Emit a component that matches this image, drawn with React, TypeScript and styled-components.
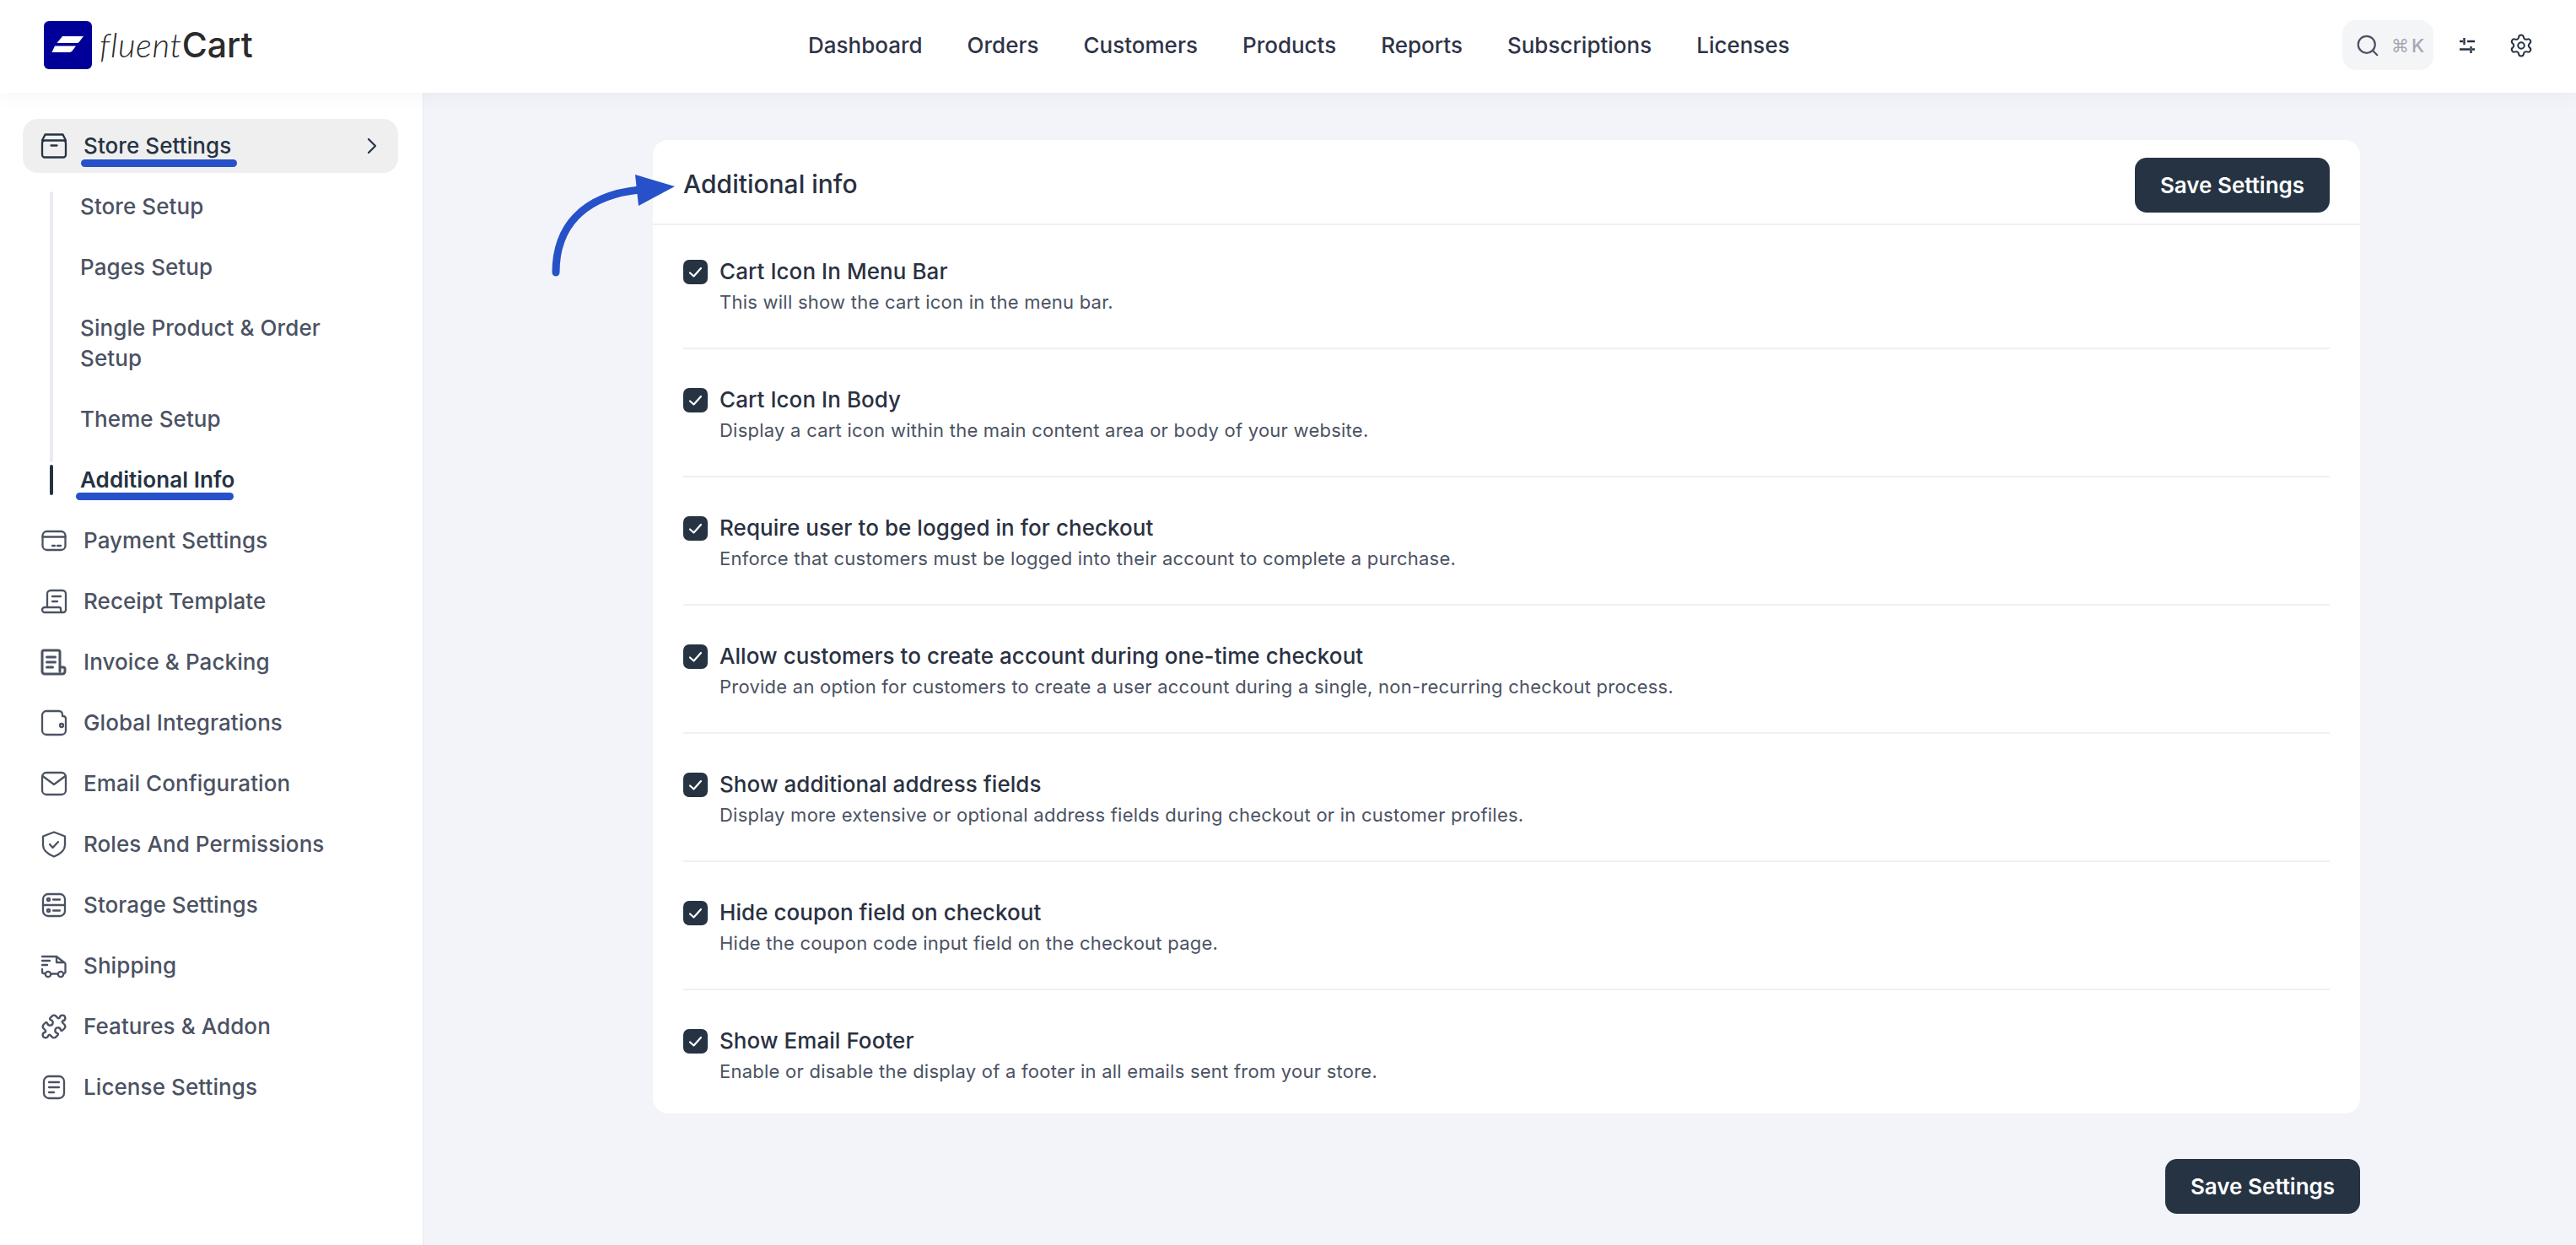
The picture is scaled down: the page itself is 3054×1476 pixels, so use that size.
import React from "react";
import styled, { createGlobalStyle } from "styled-components";
import { Search, Settings, Puzzle } from "lucide-react";

const Global = createGlobalStyle`
  html, body { margin: 0; padding: 0; }
  body { background: #f3f4f9; font-family: Inter, "Liberation Sans", sans-serif; -webkit-font-smoothing: antialiased; }
  * { box-sizing: border-box; }
`;

const Page = styled.div`
  width: 3054px;
  height: 1476px;
  display: flex;
  flex-direction: column;
  overflow: hidden;
  position: relative;
`;
const Header = styled.header`
  height: 110px;
  flex: none;
  background: #fff;
  display: flex;
  align-items: center;
  padding: 0 50px 3px 52px;
  box-shadow: 0 2px 24px rgba(30, 40, 70, 0.05);
  position: relative;
  z-index: 2;
`;
const Brand = styled.div`
  display: flex;
  align-items: center;
  gap: 9px;
  width: 906px;
`;
const BrandName = styled.span`
  font-size: 40px;
  color: #2b2b2b;
  line-height: 1;
  display: flex;
  align-items: baseline;
`;
const BrandThin = styled.span`
  font-family: Lato, sans-serif;
  font-weight: 300;
  font-style: italic;
  letter-spacing: 0.6px;
`;
const BrandBold = styled.span`
  font-family: Inter, sans-serif;
  font-weight: 500;
  font-size: 41px;
`;
const TopNav = styled.nav`
  display: flex;
  gap: 53px;
`;
const TopLink = styled.a`
  font-size: 26px;
  font-weight: 500;
  color: #2f3448;
  line-height: 36px;
`;
const Tools = styled.div`
  margin-left: auto;
  display: flex;
  align-items: center;
`;
const SearchPill = styled.div`
  width: 108px;
  height: 59px;
  border-radius: 16px;
  background: #f4f5f7;
  display: flex;
  align-items: center;
  padding-left: 15px;
  gap: 13px;
  color: #4b5263;
  margin-right: 31px;
`;
const Kbd = styled.span`
  font-size: 21px;
  font-weight: 500;
  color: #a4a7b3;
  letter-spacing: 1px;
  font-family: "DejaVu Sans", Inter, sans-serif;
`;
const KbdKey = styled.span`
  font-family: Inter, sans-serif;
  font-size: 22px;
  margin-left: 2px;
`;
const SliderIcon = styled.svg`
  margin-right: 40px;
  display: block;
`;
const Body = styled.div`
  flex: 1;
  display: flex;
  min-height: 0;
`;
const Sidebar = styled.aside`
  width: 503px;
  flex: none;
  background: #fff;
  border-right: 2px solid #eceef4;
  padding: 31px 29px 0 27px;
  display: flex;
  flex-direction: column;
  gap: 8px;
`;
const MenuItem = styled.div<{ $active?: boolean }>`
  min-height: 64px;
  display: flex;
  align-items: center;
  gap: 19px;
  padding: 14px 21px;
  border-radius: 18px;
  background: ${(p) => (p.$active ? "#efefef" : "transparent")};
  color: ${(p) => (p.$active ? "#253343" : "#4b5263")};
  font-size: 26px;
  font-weight: 500;
  line-height: 36px;
  letter-spacing: 0.08px;
  position: relative;
`;
const Spacer = styled.span`
  margin-left: auto;
  margin-right: 4px;
  display: flex;
`;
const MenuIcon = styled.svg`
  flex: none;
  display: block;
`;
const SubList = styled.div`
  display: flex;
  flex-direction: column;
  gap: 8px;
  margin-left: 32px;
  position: relative;
  &::before {
    content: "";
    position: absolute;
    left: 0;
    top: 14px;
    bottom: 53px;
    width: 4px;
    border-radius: 2px;
    background: #e9ebf2;
  }
`;
const SubItem = styled.div<{ $active?: boolean }>`
  padding: 14px 30px 14px 36px;
  font-size: 26px;
  line-height: 36px;
  letter-spacing: 0.08px;
  font-weight: ${(p) => (p.$active ? 600 : 500)};
  color: ${(p) => (p.$active ? "#253343" : "#4b5263")};
  position: relative;
  ${(p) =>
    p.$active &&
    `&::before { content: ""; position: absolute; left: 0; top: 14px; height: 36px; width: 4px; border-radius: 2px; background: #253343; }`}
`;
const Mark = styled.span<{ $left: number; $width: number; $top: number }>`
  position: absolute;
  left: ${(p) => p.$left}px;
  width: ${(p) => p.$width}px;
  top: ${(p) => p.$top}px;
  height: 9px;
  border-radius: 5px;
  background: #2651c9;
`;
const Main = styled.main`
  flex: 1;
  padding: 56px 256px 0 271px;
  display: flex;
  flex-direction: column;
  align-items: stretch;
`;
const Card = styled.section`
  background: #fff;
  border-radius: 18px;
  height: 1154px;
`;
const CardHead = styled.div`
  height: 101px;
  border-bottom: 2px solid #eff0f4;
  display: flex;
  align-items: center;
  justify-content: space-between;
  padding: 8px 36px 0 36px;
`;
const CardTitle = styled.h2`
  margin: 0;
  font-size: 30px;
  font-weight: 500;
  color: #2a3142;
  line-height: 40px;
  position: relative;
  top: -2px;
`;
const Button = styled.button`
  width: 231px;
  height: 65px;
  border: 0;
  border-radius: 14px;
  background: #253343;
  color: #fff;
  font-family: inherit;
  font-size: 26px;
  font-weight: 600;
  padding: 0;
`;
const Rows = styled.div`
  padding: 0 36px;
  margin-top: -5px;
`;
const Row = styled.div`
  height: 152px;
  display: flex;
  gap: 14px;
  padding-top: 46px;
  border-bottom: 2px solid #eff0f4;
  &:last-child { border-bottom: 0; }
`;
const Check = styled.span`
  width: 29px;
  height: 29px;
  border-radius: 7px;
  background: #253343;
  flex: none;
  display: flex;
  align-items: center;
  justify-content: center;
`;
const RowText = styled.div`
  display: flex;
  flex-direction: column;
`;
const RowTitle = styled.div`
  font-size: 26px;
  font-weight: 500;
  color: #2a3142;
  line-height: 30px;
  letter-spacing: 0.06px;
  margin-top: -1px;
`;
const RowDesc = styled.div`
  font-size: 22px;
  color: #4b5263;
  line-height: 30px;
  letter-spacing: 0.24px;
  margin-top: 6px;
`;
const Footer = styled.div`
  display: flex;
  justify-content: flex-end;
  margin-top: 54px;
`;
const Arrow = styled.svg`
  position: absolute;
  left: 640px;
  top: 190px;
  z-index: 3;
`;

const stroke = { fill: "none", stroke: "currentColor", strokeWidth: 2.3, strokeLinecap: "round", strokeLinejoin: "round" } as const;

const Ico = ({ children }: { children: React.ReactNode }) => (
  <MenuIcon width={32} height={32} viewBox="0 0 32 32" {...stroke}>
    {children}
  </MenuIcon>
);

const icons: Record<string, React.ReactNode> = {
  card: (
    <Ico>
      <rect x="2.5" y="5" width="27" height="22" rx="5" />
      <path d="M2.5 11.500h27M14 22h3M20 22h4" />
    </Ico>
  ),
  receipt: (
    <Ico>
      <path d="M8 22V7a4 4 0 0 1 4-4h14a4 4 0 0 1 4 4v19a3 3 0 0 1-6 0v-1a2 2 0 0 0-2-2H5a3 3 0 0 0 0 6h22" />
      <path d="M14 10h10M14 16h6" />
    </Ico>
  ),
  invoice: (
    <Ico>
      <path strokeWidth="3" d="M23 22h4a2 2 0 0 1 2 2v3a3 3 0 0 1-3 3H5a3 3 0 0 1-3-3V4a2 2 0 0 1 2-2h17a2 2 0 0 1 2 2v23" />
      <path strokeWidth="3" d="M7.500 10h10M7.500 16h10M7.500 22h7" />
    </Ico>
  ),
  wallet: (
    <Ico>
      <path d="M2 7a5 5 0 0 1 5-5h15a4 4 0 0 1 4 4v2h1a3 3 0 0 1 3 3v14a5 5 0 0 1-5 5H7a5 5 0 0 1-5-5Z" />
      <circle cx="25" cy="19" r="2" />
    </Ico>
  ),
  mail: (
    <Ico>
      <rect x="2" y="3" width="28" height="26" rx="5" />
      <path d="M2.500 7L16 17 29.500 7" />
    </Ico>
  ),
  shield: (
    <Ico>
      <path d="M16 1.500L29 6.500V17C29 24 22 28 16 30.500 10 28 3 24 3 17V6.500Z" />
      <path d="M11 16l3.500 4 6.500-7" />
    </Ico>
  ),
  storage: (
    <Ico>
      <rect x="3" y="3" width="26" height="26" rx="6" />
      <path d="M3 16h26M15 9.500h8M15 22.500h8" />
      <circle cx="9.500" cy="9.500" r="1.500" />
      <circle cx="9.500" cy="22.500" r="1.500" />
    </Ico>
  ),
  truck: (
    <Ico>
      <path d="M2 5h17l9 7a2 2 0 0 1 1.500 2v9a2 2 0 0 1-2 2" />
      <path d="M19 5v7h9M2 10h9M2 15h6M2 20v3a2 2 0 0 0 2 2h1M12.500 25.500h8" />
      <circle cx="9" cy="26" r="3.200" />
      <circle cx="24" cy="26" r="3.200" />
    </Ico>
  ),
  license: (
    <Ico>
      <rect x="4" y="3" width="24" height="26" rx="6" />
      <path d="M10 10h12M10 16h12M10 22h6" />
    </Ico>
  ),
};

const menu: [string, string][] = [
  ["card", "Payment Settings"],
  ["receipt", "Receipt Template"],
  ["invoice", "Invoice & Packing"],
  ["wallet", "Global Integrations"],
  ["mail", "Email Configuration"],
  ["shield", "Roles And Permissions"],
  ["storage", "Storage Settings"],
  ["truck", "Shipping"],
  ["puzzle", "Features & Addon"],
  ["license", "License Settings"],
];

const rows: [string, string][] = [
  ["Cart Icon In Menu Bar", "This will show the cart icon in the menu bar."],
  ["Cart Icon In Body", "Display a cart icon within the main content area or body of your website."],
  ["Require user to be logged in for checkout", "Enforce that customers must be logged into their account to complete a purchase."],
  ["Allow customers to create account during one-time checkout", "Provide an option for customers to create a user account during a single, non-recurring checkout process."],
  ["Show additional address fields", "Display more extensive or optional address fields during checkout or in customer profiles."],
  ["Hide coupon field on checkout", "Hide the coupon code input field on the checkout page."],
  ["Show Email Footer", "Enable or disable the display of a footer in all emails sent from your store."],
];

const nav = ["Dashboard", "Orders", "Customers", "Products", "Reports", "Subscriptions", "Licenses"];

export default function App() {
  return (
    <Page>
      <Global />
      <Header>
        <Brand>
          <svg width="57" height="57" viewBox="0 0 57 57">
            <rect width="57" height="57" rx="6" fill="#000099" />
            <path d="M22 18h25l-5 6.500a3 3 0 0 1-2.500 1.500H15.500z" fill="#fff" />
            <path d="M13 29.500h25l-4.500 6a4 4 0 0 1-3 1.500H9.500z" fill="#fff" />
          </svg>
          <BrandName>
            <BrandThin>fluent</BrandThin>
            <BrandBold>Cart</BrandBold>
          </BrandName>
        </Brand>
        <TopNav>
          {nav.map((n) => (
            <TopLink key={n}>{n}</TopLink>
          ))}
        </TopNav>
        <Tools>
          <SearchPill>
            <Search size={30} strokeWidth={1.8} />
            <Kbd>
              ⌘<KbdKey>K</KbdKey>
            </Kbd>
          </SearchPill>
          <SliderIcon width="18" height="18" viewBox="0 0 18 18" fill="none" stroke="#253343" strokeWidth="2.4">
            <path d="M0 4h4M5.500 0v8M9 4h9M0 13.500h12M13.500 10v8M15 13.500h3" />
          </SliderIcon>
          <Settings size={30} strokeWidth={1.6} color="#253343" />
        </Tools>
      </Header>
      <Body>
        <Sidebar>
          <MenuItem $active>
            <Ico>
              <path d="M2 9.500L5.500 2.500h21L30 9.500" />
              <rect x="2" y="9.500" width="28" height="20" rx="3" />
              <path d="M12.500 15.500h7" />
            </Ico>
            Store Settings
            <Spacer>
              <svg width="12" height="20" viewBox="0 0 12 20" fill="none" stroke="currentColor" strokeWidth="2.2" strokeLinecap="round" strokeLinejoin="round">
                <path d="M2 2l8 8-8 8" />
              </svg>
            </Spacer>
            <Mark $left={69} $width={185} $top={48} />
          </MenuItem>
          <SubList>
            <SubItem>Store Setup</SubItem>
            <SubItem>Pages Setup</SubItem>
            <SubItem>Single Product &amp; Order Setup</SubItem>
            <SubItem>Theme Setup</SubItem>
            <SubItem $active>
              Additional Info
              <Mark $left={31} $width={187} $top={47} />
            </SubItem>
          </SubList>
          {menu.map(([icon, label]) => (
            <MenuItem key={label}>
              {icon === "puzzle" ? <Puzzle size={32} strokeWidth={1.8} /> : icons[icon]}
              {label}
            </MenuItem>
          ))}
        </Sidebar>
        <Main>
          <Card>
            <CardHead>
              <CardTitle>Additional info</CardTitle>
              <Button>Save Settings</Button>
            </CardHead>
            <Rows>
              {rows.map(([t, d]) => (
                <Row key={t}>
                  <Check>
                    <svg width="17" height="14" viewBox="0 0 17 14" fill="none" stroke="#fff" strokeWidth="2.2" strokeLinecap="round" strokeLinejoin="round">
                      <path d="M2 7.500l4.500 4L15 2" />
                    </svg>
                  </Check>
                  <RowText>
                    <RowTitle>{t}</RowTitle>
                    <RowDesc>{d}</RowDesc>
                  </RowText>
                </Row>
              ))}
            </Rows>
          </Card>
          <Footer>
            <Button>Save Settings</Button>
          </Footer>
        </Main>
      </Body>
      <Arrow width="170" height="150" viewBox="0 0 170 150">
        <path d="M19 133C19 80 50 42 118 35" fill="none" stroke="#2651c9" strokeWidth="9" strokeLinecap="round" />
        <path d="M113 17L117 54 160 31Z" fill="#2651c9" />
      </Arrow>
    </Page>
  );
}
